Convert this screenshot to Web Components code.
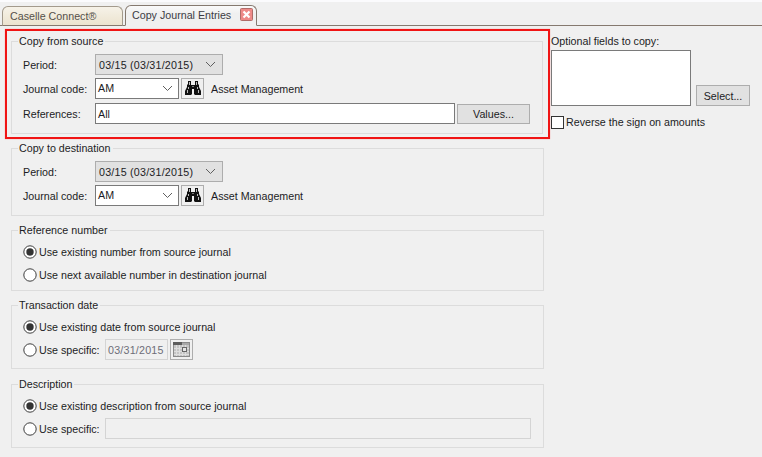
<!DOCTYPE html>
<html>
<head>
<meta charset="utf-8">
<title>Copy Journal Entries</title>
<style>
  html, body { margin: 0; height: 100%; overflow: hidden; background: #f0f0f0; }
  body { font: 10.7px/14px "Liberation Sans", "Noto Sans", sans-serif; color: #1c1c24; }
</style>
</head>
<body>
<script>
const chevron = `<svg width="11" height="7" viewBox="0 0 11 7"><path d="M1 1l4.5 4.5L10 1" fill="none" stroke="#5f5f5f" stroke-width="1"/></svg>`;

class TabBar extends HTMLElement {
  constructor() {
    super();
    this.attachShadow({ mode: 'open' });
    this.shadowRoot.innerHTML = `
      <style>
        :host { display: flex; align-items: flex-end; gap: 2px; height: 23px; padding: 0 0 0 2px; border-top: 2px solid #fbfbfd; border-bottom: 1px solid #85796f; }
      </style>
      <slot></slot>`;
  }
}

class TabItem extends HTMLElement {
  constructor() {
    super();
    this.attachShadow({ mode: 'open' });
    this.shadowRoot.innerHTML = `
      <style>
        :host { display: flex; align-items: center; box-sizing: border-box; height: 20px; margin-bottom: -1px; padding: 0 0 1px 7px; border: 1px solid #a39a8c; border-bottom: 1px solid #85796f; border-radius: 6px 6px 0 0; background: linear-gradient(#f6f2e8, #ece3cf); color: #55504a; white-space: nowrap; }
        :host([active]) { height: 21px; padding-bottom: 2px; border-color: #85796f; border-bottom: 1px solid #f0f0f0; background: linear-gradient(#fafafa, #f0f0f0 40%); color: #3c3c44; padding-left: 6px; }
      </style>
      <slot></slot>`;
  }
}

class CloseIcon extends HTMLElement {
  constructor() {
    super();
    this.attachShadow({ mode: 'open' });
    this.shadowRoot.innerHTML = `
      <style>:host { display: block; width: 13px; height: 13px; margin-left: 9px; }</style>
      <svg width="13" height="13" viewBox="0 0 13 13" style="display:block">
        <rect x=".5" y=".5" width="12" height="12" rx="1" fill="#ee8a88" stroke="#b06c68"/>
        <path d="M3.5 3.5l6 6M9.5 3.5l-6 6" stroke="#fff" stroke-width="2.2"/>
      </svg>`;
  }
}

class FormGroup extends HTMLElement {
  constructor() {
    super();
    this.attachShadow({ mode: 'open' });
    this.shadowRoot.innerHTML = `
      <style>
        :host { display: block; }
        fieldset { margin: 0; min-width: 0; padding: 6px 12px 9px 11px; border: 1px solid #dcdcdc; }
        :host([compact]) fieldset { padding-top: 3px; padding-bottom: 4px; }
        :host([tall]) fieldset { padding-bottom: 7px; }
        legend { padding: 0 2px 0 1px; margin-left: -5px; line-height: 14px; }
      </style>
      <fieldset>
        <legend></legend>
        <slot></slot>
      </fieldset>`;
  }
  connectedCallback() {
    this.shadowRoot.querySelector('legend').textContent = this.getAttribute('title');
    this.removeAttribute('title');
  }
}

class FormRow extends HTMLElement {
  constructor() {
    super();
    this.attachShadow({ mode: 'open' });
    this.shadowRoot.innerHTML = `
      <style>
        :host { display: flex; align-items: center; }
        :host([radio]) { height: 23px; }
        .label { width: 72px; flex: none; }
        :host([radio]) .label { display: none; }
      </style>
      <span class="label"></span><slot></slot>`;
  }
  connectedCallback() {
    this.shadowRoot.querySelector('.label').textContent = this.getAttribute('label') || '';
  }
}

class PeriodSelect extends HTMLElement {
  constructor() {
    super();
    this.attachShadow({ mode: 'open' });
    this.shadowRoot.innerHTML = `
      <style>
        :host { display: flex; align-items: center; justify-content: space-between; box-sizing: border-box; width: 128px; height: 21px; padding: 0 6px 0 3px; border: 1px solid #adadad; background: #e1e1e1; letter-spacing: .22px; }
      </style>
      <slot></slot>${chevron}`;
  }
}

class ComboBox extends HTMLElement {
  constructor() {
    super();
    this.attachShadow({ mode: 'open' });
    this.shadowRoot.innerHTML = `
      <style>
        :host { display: flex; align-items: center; justify-content: space-between; box-sizing: border-box; width: 84px; height: 21px; padding: 0 5px 2px 2px; border: 1px solid #7a7a7a; background: #fff; }
        svg { margin-top: 2px; }
      </style>
      <slot></slot>${chevron}`;
  }
}

class TextField extends HTMLElement {
  constructor() {
    super();
    this.attachShadow({ mode: 'open' });
    this.shadowRoot.innerHTML = `
      <style>
        :host { display: block; box-sizing: border-box; height: 21px; padding: 3px 2px 0; border: 1px solid #7a7a7a; background: #fff; flex: 1; }
        :host([disabled]) { border-color: #d4d4d4; background: #f0f0f0; color: #6d6d78; letter-spacing: .22px; }
      </style>
      <slot></slot>`;
  }
}

class PushButton extends HTMLElement {
  constructor() {
    super();
    this.attachShadow({ mode: 'open' });
    this.shadowRoot.innerHTML = `
      <style>
        :host { display: flex; align-items: center; justify-content: center; box-sizing: border-box; height: 20px; border: 1px solid #adadad; background: #e1e1e1; }
        :host([icon]) { background: #f0f0f0; height: 21px; width: 23px; }
        :host([tall]) { height: 21px; }
      </style>
      <slot></slot>`;
  }
}

class RadioOption extends HTMLElement {
  constructor() {
    super();
    this.attachShadow({ mode: 'open' });
    this.shadowRoot.innerHTML = `
      <style>
        :host { display: inline-flex; align-items: center; gap: 2px; }
        svg { display: block; }
      </style>
      <svg width="14" height="14" viewBox="0 0 14 14">
        <circle cx="7" cy="7" r="6.2" fill="#fff" stroke="#3c3c3c"/>
        <circle class="dot" cx="7" cy="7" r="3.7" fill="#333"/>
      </svg>
      <slot></slot>`;
  }
  connectedCallback() {
    if (!this.hasAttribute('checked')) this.shadowRoot.querySelector('.dot').remove();
  }
}

class CheckOption extends HTMLElement {
  constructor() {
    super();
    this.attachShadow({ mode: 'open' });
    this.shadowRoot.innerHTML = `
      <style>
        :host { display: flex; align-items: center; gap: 2px; }
        i { display: block; box-sizing: border-box; width: 13px; height: 13px; border: 1px solid #333; background: #fff; }
      </style>
      <i></i><slot></slot>`;
  }
}

class BinocularsIcon extends HTMLElement {
  constructor() {
    super();
    this.attachShadow({ mode: 'open' });
    this.shadowRoot.innerHTML = `
      <style>:host { display: block; width: 16px; height: 15px; } svg { display: block; }</style>
      <svg width="16" height="15" viewBox="0 0 16 15">
        <path d="M3 0h3v4h4V0h3v3l1 1v2l2 4v4h-6l-1-1V8H7v5l-1 1H0v-4l2-4V4l1-1z" fill="#111"/>
        <path d="M4 1h1v3H4zM11 1h1v3h-1zM3 6h1v2H3zM12 6h1v2h-1zM2 9h1v3H2zM13 9h1v3h-1z" fill="#bbb"/>
        <path d="M7 5h2v1H7z" fill="#777"/>
      </svg>`;
  }
}

class CalendarIcon extends HTMLElement {
  constructor() {
    super();
    this.attachShadow({ mode: 'open' });
    this.shadowRoot.innerHTML = `
      <style>:host { display: block; width: 17px; height: 15px; } svg { display: block; }</style>
      <svg width="17" height="15" viewBox="0 0 17 15">
        <rect width="17" height="15" fill="#8a8a8a"/>
        <rect x="1" y="3" width="15" height="11" fill="#c4c4c4"/>
        <rect x="0" y="0" width="9" height="3" fill="#5c5c5c"/>
        <rect x="9" y="1" width="7" height="2" fill="#a8a8a8"/>
        <path d="M1 6.5h15M1 9.5h15M1 12.5h15M3.5 3v11M6.5 3v11M9.5 3v11M12.5 3v11" stroke="#dedede"/>
        <rect x="9.5" y="5.5" width="4" height="4" fill="#e6e6e6" stroke="#666"/>
      </svg>`;
  }
}

class CopyJournalApp extends HTMLElement {
  constructor() {
    super();
    this.attachShadow({ mode: 'open' });
    this.shadowRoot.innerHTML = `
      <style>
        :host { display: block; }
        .main { display: flex; padding: 3px 0 0 5px; }
        .left { width: 545px; flex: none; }
        .highlight { box-sizing: border-box; height: 110px; padding: 3px 5px 0 4px; border: 2px solid #f01414; box-shadow: 0 0 1px #f88; }
        .stack { display: flex; flex-direction: column; gap: 7px; padding: 2px 6px 0 6px; }
        .right { margin-left: 1px; padding-top: 5px; width: 200px; }
        .fields { display: flex; align-items: flex-end; gap: 5px; margin-top: 2px; }
        .list { box-sizing: border-box; width: 140px; height: 56px; border: 1px solid #7a7a7a; background: #fff; }
        .reverse { margin-top: 9px; }
        .gap3 { margin-top: 3px; }
        .gap4 { margin-top: 4px; }
        .ml2 { margin-left: 2px; }
        .desc { margin-left: 7px; }
        .spec { width: 82px; flex: none; }
        .date { flex: none; width: 63px; }
        .values { width: 73px; margin-left: 2px; }
        .select { width: 54px; }
        .mt1 { margin-top: 1px; }
      </style>
      <tab-bar>
        <tab-item style="width:121px">Caselle Connect®</tab-item>
        <tab-item active style="width:132px">Copy Journal Entries<close-icon></close-icon></tab-item>
      </tab-bar>
      <div class="main">
        <div class="left">
          <div class="highlight">
            <form-group title="Copy from source">
              <form-row label="Period:"><period-select>03/15 (03/31/2015)</period-select></form-row>
              <form-row label="Journal code:" class="gap3">
                <combo-box>AM</combo-box>
                <push-button icon class="ml2"><binoculars-icon></binoculars-icon></push-button>
                <span class="desc">Asset Management</span>
              </form-row>
              <form-row label="References:" class="gap4">
                <text-field>All</text-field>
                <push-button class="values">Values...</push-button>
              </form-row>
            </form-group>
          </div>
          <div class="stack">
            <form-group title="Copy to destination">
              <form-row label="Period:"><period-select>03/15 (03/31/2015)</period-select></form-row>
              <form-row label="Journal code:" class="gap3">
                <combo-box>AM</combo-box>
                <push-button icon class="ml2"><binoculars-icon></binoculars-icon></push-button>
                <span class="desc">Asset Management</span>
              </form-row>
            </form-group>
            <form-group title="Reference number" compact>
              <form-row radio><radio-option checked>Use existing number from source journal</radio-option></form-row>
              <form-row radio><radio-option>Use next available number in destination journal</radio-option></form-row>
            </form-group>
            <form-group title="Transaction date" compact tall>
              <form-row radio><radio-option checked>Use existing date from source journal</radio-option></form-row>
              <form-row radio>
                <radio-option class="spec">Use specific:</radio-option>
                <text-field disabled class="date">03/31/2015</text-field>
                <push-button icon class="ml2"><calendar-icon></calendar-icon></push-button>
              </form-row>
            </form-group>
            <form-group title="Description" compact tall class="mt1">
              <form-row radio><radio-option checked>Use existing description from source journal</radio-option></form-row>
              <form-row radio>
                <radio-option class="spec">Use specific:</radio-option>
                <text-field disabled></text-field>
              </form-row>
            </form-group>
          </div>
        </div>
        <div class="right">
          <div>Optional fields to copy:</div>
          <div class="fields">
            <div class="list"></div>
            <push-button tall class="select">Select...</push-button>
          </div>
          <check-option class="reverse">Reverse the sign on amounts</check-option>
        </div>
      </div>`;
  }
}

customElements.define('tab-bar', TabBar);
customElements.define('tab-item', TabItem);
customElements.define('close-icon', CloseIcon);
customElements.define('form-group', FormGroup);
customElements.define('form-row', FormRow);
customElements.define('period-select', PeriodSelect);
customElements.define('combo-box', ComboBox);
customElements.define('text-field', TextField);
customElements.define('push-button', PushButton);
customElements.define('radio-option', RadioOption);
customElements.define('check-option', CheckOption);
customElements.define('binoculars-icon', BinocularsIcon);
customElements.define('calendar-icon', CalendarIcon);
customElements.define('copy-journal-app', CopyJournalApp);

document.body.appendChild(document.createElement('copy-journal-app'));
</script>
</body>
</html>
